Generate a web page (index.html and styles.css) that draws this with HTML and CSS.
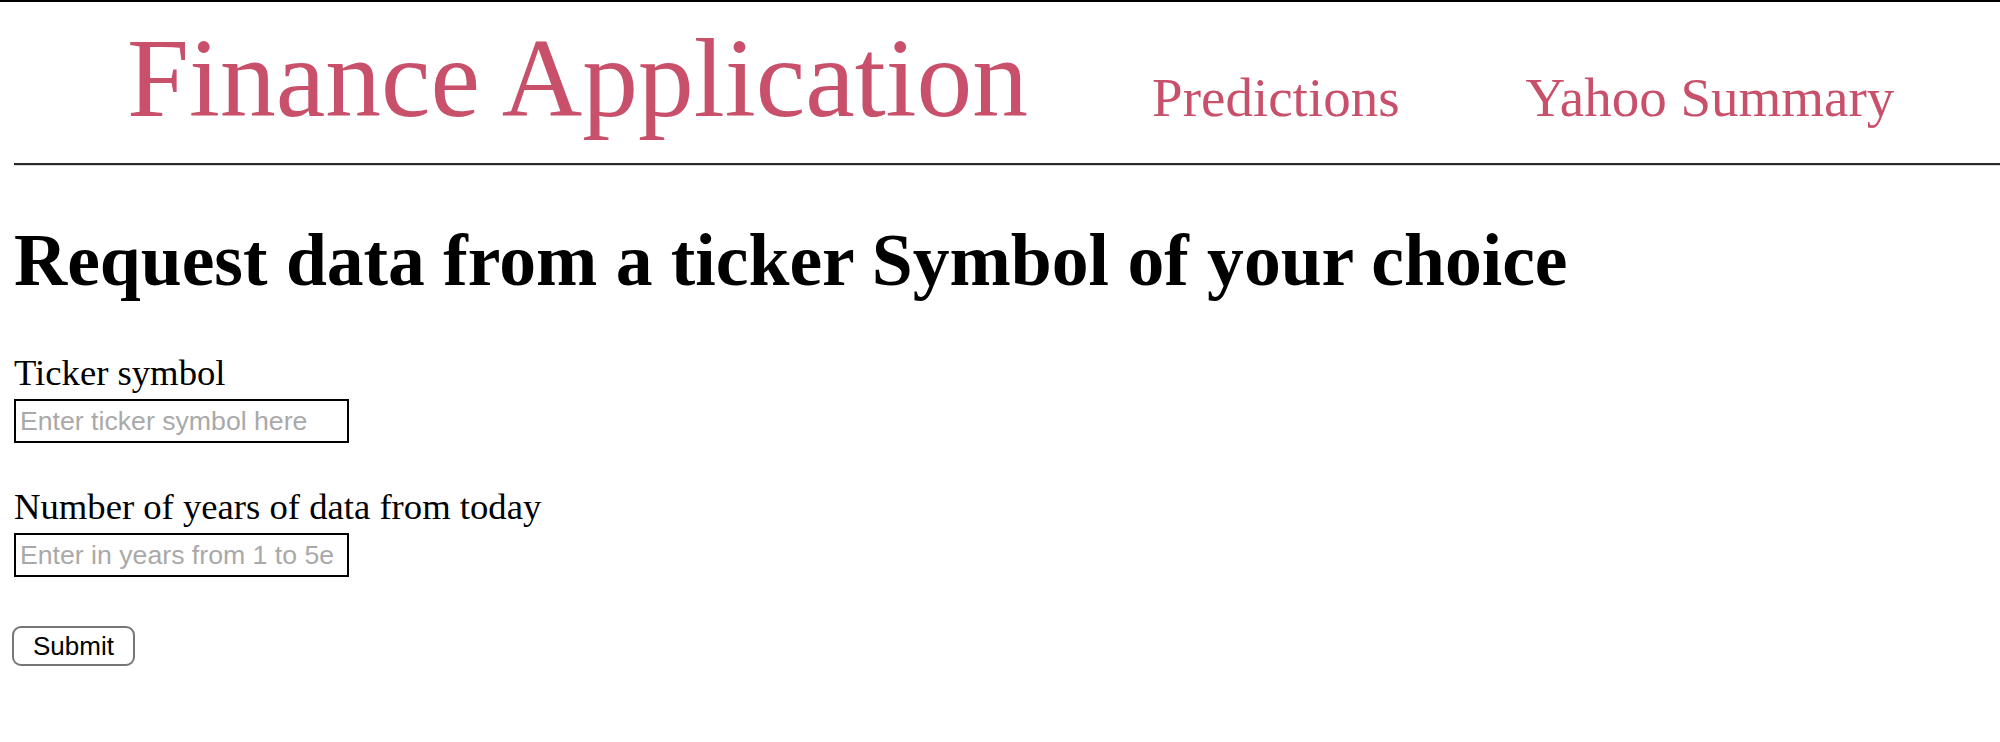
FILE: index.html
```html
<!DOCTYPE html>
<html lang="en">
<head>
<meta charset="utf-8">
<title>Finance Application</title>
<link rel="stylesheet" href="styles.css">
</head>
<body>
<div class="page">
  <header class="header">
    <a class="brand" href="#">Finance Application</a>
    <nav class="nav">
      <a class="nav-link" href="#">Predictions</a>
      <a class="nav-link" href="#">Yahoo Summary</a>
    </nav>
  </header>
  <div class="rule"></div>
  <main class="content">
    <h1 class="title">Request data from a ticker Symbol of your choice</h1>
    <form class="form">
      <div class="field">
        <label class="label" for="ticker">Ticker symbol</label>
        <input class="input" id="ticker" type="text" placeholder="Enter ticker symbol here">
      </div>
      <div class="field">
        <label class="label" for="years">Number of years of data from today</label>
        <input class="input" id="years" type="text" placeholder="Enter in years from 1 to 5e">
      </div>
      <button class="submit" type="button">Submit</button>
    </form>
  </main>
</div>
</body>
</html>
```

FILE: styles.css
```css
html {
  border-top: 2px solid #000;
  background: #fff;
}
body {
  margin: 0;
  font-family: "Liberation Serif", "Times New Roman", serif;
  color: #000;
}
.page {
  padding-left: 14px;
}
.header {
  display: flex;
  align-items: baseline;
  padding-top: 22px;
  padding-left: 113px;
}
.brand {
  font-size: 111.5px;
  line-height: 110px;
  color: #c8506a;
  text-decoration: none;
  white-space: nowrap;
}
.nav {
  display: flex;
  align-items: baseline;
  gap: 126px;
  margin-left: 124px;
}
.nav-link {
  font-size: 55px;
  line-height: 64px;
  color: #c8506a;
  text-decoration: none;
  white-space: nowrap;
}
.rule {
  margin-top: 29px;
  border-top: 2px solid #2a2a2a;
  border-bottom: 1px solid #d6d6d6;
}
.content {
  padding-top: 52px;
}
.title {
  margin: 0;
  font-size: 73.6px;
  line-height: 84px;
  font-weight: bold;
  white-space: nowrap;
}
.form {
  display: flex;
  flex-direction: column;
  align-items: flex-start;
  padding-top: 50px;
}
.field {
  display: flex;
  flex-direction: column;
  align-items: flex-start;
  margin-bottom: 43px;
}
.field:last-of-type {
  margin-bottom: 49px;
}
.label {
  font-size: 36.67px;
  line-height: 42px;
  white-space: nowrap;
}
.input {
  margin: 5px 0 0;
  box-sizing: border-box;
  width: 335px;
  height: 44px;
  padding: 0 4px;
  border: 2px solid #000;
  border-radius: 0;
  font-family: "Liberation Sans", Arial, sans-serif;
  font-size: 26.67px;
  color: #000;
  background: #fff;
  outline: none;
}
.input::placeholder {
  color: #a9a9a9;
  opacity: 1;
}
.submit {
  margin: 0 0 0 -2px;
  box-sizing: border-box;
  width: 123px;
  height: 40px;
  padding: 0;
  border: 2px solid #767676;
  border-radius: 9px;
  background: #fff;
  font-family: "Liberation Sans", Arial, sans-serif;
  font-size: 26px;
  color: #000;
}
```
